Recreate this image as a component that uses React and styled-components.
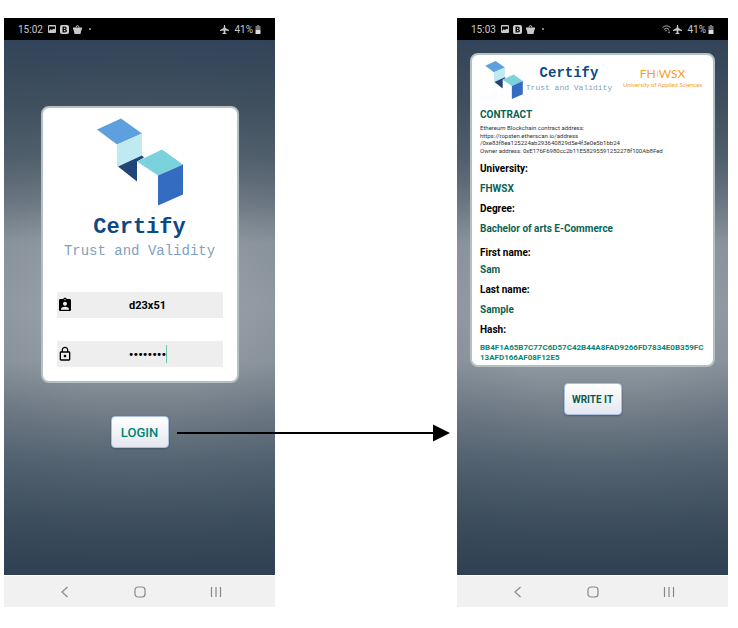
import React from "react";
import styled, { createGlobalStyle } from "styled-components";

const GlobalStyle = createGlobalStyle`
  * { box-sizing: border-box; }
  body { margin: 0; background: #fff; font-family: Roboto, "Liberation Sans", sans-serif; }
  h2, p, dl, dt, dd { margin: 0; }
`;

const Flow = styled.main`
  display: grid;
  grid-template-columns: 271fr 182fr 271fr;
  padding: 18px 10px 21px 4px;
`;

const Phone = styled.section`
  display: flex;
  flex-direction: column;
  min-width: 0;
`;

const StatusBar = styled.header`
  display: flex;
  align-items: center;
  justify-content: space-between;
  height: 22px;
  padding: 0 14px;
  background: #000;
  color: #c8c8c8;
  font-size: 10px;
`;

const StatusGroup = styled.div`
  display: flex;
  align-items: center;
  gap: ${(p) => p.$gap}px;
  svg { display: block; }
`;

const Screen = styled.div`
  display: flex;
  flex-direction: column;
  align-items: center;
  min-height: 535px;
  padding: ${(p) => p.$top}px 0 0;
  background:
    radial-gradient(ellipse 85% 75% at 50% 50%, rgba(44, 62, 84, 0) 30%, rgba(44, 62, 84, 0.22) 100%),
    linear-gradient(#33455a 0%, #43525f 12%, #55636f 22%, #707b85 30%, #929ba3 38%, #98a1a9 50%, #929ba3 60%, #77828c 68%, #566572 79%, #3f4f5d 90%, #2f4053 100%);
`;

const Card = styled.div`
  display: flex;
  flex-direction: column;
  border: 2px solid #b4c1c3;
  border-radius: 8px;
  background: #fff;
`;

const LoginCard = styled(Card)`
  align-items: center;
  width: 198px;
  min-height: 277px;
  padding: 10px 14px 14px;
`;

const ContractCard = styled(Card)`
  width: 245px;
  min-height: 314px;
  padding: 6px 8px 0;
`;

const Brand = styled.div`
  color: #0b4a84;
  font-family: "Liberation Mono", monospace;
  font-weight: 700;
  font-size: ${(p) => (p.$small ? 14 : 22)}px;
  line-height: ${(p) => (p.$small ? 18 : 28)}px;
  text-align: center;
`;

const Tagline = styled.div`
  color: #7f9fc0;
  font-family: "Liberation Mono", monospace;
  font-size: ${(p) => (p.$small ? 8 : 14)}px;
  line-height: ${(p) => (p.$small ? 10 : 18)}px;
  white-space: nowrap;
`;

const LoginBrand = styled.div`
  display: flex;
  flex-direction: column;
  align-items: center;
  margin-top: 8px;
`;

const LoginForm = styled.form`
  display: flex;
  flex-direction: column;
  gap: 23px;
  width: 100%;
  margin-top: 32px;
`;

const Field = styled.label`
  display: flex;
  align-items: center;
  position: relative;
  height: 26px;
  background: #eee;
  svg { position: absolute; left: 0; }
`;

const FieldInput = styled.input`
  width: 100%;
  height: 26px;
  padding: 0 0 0 16px;
  border: 0;
  background: transparent;
  color: #000;
  font: 700 ${(p) => (p.type === "password" ? 13 : 11)}px Roboto, sans-serif;
  text-align: center;
  outline: none;
`;

const Caret = styled.span`
  position: absolute;
  top: 4px;
  left: 109px;
  width: 1px;
  height: 18px;
  background: #6cc5b9;
`;

const ActionButton = styled.button`
  height: 32px;
  width: 58px;
  margin-top: ${(p) => p.$top}px;
  padding: 0;
  border: 1px solid #a9bfdd;
  border-radius: 4px;
  background: linear-gradient(#fff, #e4e7ef);
  box-shadow: 0 1px 2px rgba(30, 50, 80, 0.4);
  color: ${(p) => p.$color};
  font: ${(p) => p.$weight} ${(p) => p.$size}px Roboto, sans-serif;
  white-space: nowrap;
`;

const Letterhead = styled.div`
  display: grid;
  grid-template-columns: 39px 90px 1fr;
  height: 45px;
  padding-left: 5px;
`;

const BrandBlock = styled.div`
  display: flex;
  flex-direction: column;
  align-items: center;
  gap: 1px;
  padding-top: 3px;
`;

const School = styled.div`
  display: flex;
  flex-direction: column;
  align-items: center;
  padding: 6px 0 0 6px;
  color: #f7a01d;
  font-family: Lato, sans-serif;
  white-space: nowrap;
`;

const SchoolName = styled.div`
  display: flex;
  align-items: center;
  font-size: 12px;
  line-height: 14px;
`;

const SchoolDivider = styled.i`
  width: 1px;
  height: 6px;
  margin: 0 1px;
  background: #fbd08a;
`;

const SchoolCaption = styled.div`
  font-size: 6px;
  line-height: 8px;
`;

const Title = styled.h2`
  color: #0b6354;
  font-size: 10px;
  line-height: 14px;
  margin: 2px 0 1px;
`;

const Address = styled.p`
  color: #333;
  font-size: 6px;
  line-height: 7px;
  margin-top: 1px;
`;

const Details = styled.dl`
  display: flex;
  flex-direction: column;
  margin-top: 8px;
  font-weight: 700;
`;

const Term = styled.dt`
  color: #000;
  font-size: 10px;
  line-height: 14px;
`;

const Value = styled.dd`
  color: #0b6354;
  font-size: 10px;
  line-height: 14px;
  margin: ${(p) => (p.$tight ? 3 : 6)}px 0 6px;
  padding-bottom: ${(p) => (p.$last ? 4 : 0)}px;
`;

const Hash = styled.dd`
  color: #098673;
  font-size: 8px;
  line-height: 10px;
  margin-top: 6px;
  white-space: nowrap;
`;

const NavBar = styled.nav`
  display: flex;
  align-items: center;
  justify-content: space-around;
  height: 32px;
  padding: 0 21px 0 23px;
  border-top: 1px solid #fff;
  background: #f1f1f1;
`;

const NavButton = styled.button`
  display: flex;
  padding: 8px;
  border: 0;
  background: none;
`;

const Middle = styled.div`
  position: relative;
`;

const Arrow = styled.div`
  position: absolute;
  top: 406px;
  left: -98px;
  right: 7px;
  display: flex;
  align-items: center;
  &::before { content: ""; flex: 1; height: 2px; background: #000; }
`;

function Cubes({ width, height }) {
  return (
    <svg width={width} height={height} viewBox="0 0 86 87">
      <path d="M0 11 24 0 45 15 20 26Z" fill="#5da0dd" />
      <path d="M20 26 45 15V38L20 48Z" fill="#bfeaf2" />
      <path d="M21 48 45 37 47 39 40 43V63Z" fill="#204579" />
      <path d="M40 43 65 31 86 46 61 57Z" fill="#7ad3dc" />
      <path d="M61 57 86 46V76L61 87Z" fill="#346cc1" />
    </svg>
  );
}

function Plane() {
  return (
    <svg width="9" height="9" viewBox="0 0 9 9">
      <path d="M4 0h1l.4 3L9 5v1l-3.600-.6-.2 2L6.500 8.300V9h-4v-.7l1.300-.9-.2-2L0 6V5l3.600-2Z" fill="#c8c8c8" />
    </svg>
  );
}

function Status({ time, wifi }) {
  return (
    <StatusBar>
      <StatusGroup $gap={4}>
        <span>{time}</span>
        <svg width="9" height="8" viewBox="0 0 9 8">
          <path fillRule="evenodd" d="M2 0h6q1 0 1 1v6q0 1-1 1H2Q1 8 1 7V1Q1 0 2 0ZM2 1.500V6l1.800-2 1 1L7 3.500 8 4.500V1.500Z" fill="#c8c8c8" />
        </svg>
        <svg width="9" height="9" viewBox="0 0 9 9">
          <rect width="9" height="9" rx="2" fill="#d0d0d0" />
          <path fillRule="evenodd" d="M2.500 1.500H5Q6.700 1.500 6.700 3 6.700 4 6 4.400 7 4.800 7 5.800 7 7.500 5 7.500H2.500ZM4 2.700V4h.8Q5.400 4 5.400 3.300T4.800 2.700ZM4 5V6.300h.8Q5.600 6.300 5.600 5.600T4.800 5Z" fill="#111" />
        </svg>
        <svg width="9" height="9" viewBox="0 0 9 9">
          <path d="M3 2.500Q3 .7 4.500.7T6 2.500" fill="none" stroke="#c8c8c8" />
          <path d="M0 2.500h9v2H8.500L7.500 9h-6L.5 4.500H0Z" fill="#c8c8c8" />
        </svg>
        <svg width="9" height="2" viewBox="0 0 9 2">
          <circle cx="4" cy="1" r="1" fill="#aaa" />
        </svg>
      </StatusGroup>
      <StatusGroup $gap={5}>
        <StatusGroup $gap={2}>
          {wifi && (
            <svg width="9" height="8" viewBox="0 0 9 8">
              <path d="M.5 2.500Q4.500-.8 8.500 2.500M2 4.300Q4.500 2.300 7 4.300M3.300 6Q4.500 5 5 6" fill="none" stroke="#b0b0b0" />
              <path d="M7 5v3M6 7l1 1 1-1" fill="none" stroke="#999" strokeWidth=".7" />
            </svg>
          )}
          <Plane />
        </StatusGroup>
        <StatusGroup $gap={2}>
          <span>41%</span>
          <svg width="6" height="9" viewBox="0 0 6 9">
            <path d="M2 0h2v1h1.500v4h-5V1H2Z" fill="#777" />
            <path d="M.5 5h5v4h-5Z" fill="#ddd" />
          </svg>
        </StatusGroup>
      </StatusGroup>
    </StatusBar>
  );
}

function Navigation() {
  return (
    <NavBar>
      <NavButton aria-label="Back">
        <svg width="12" height="12" viewBox="0 0 12 12">
          <path d="M8.500 1 3 6l5.500 5" fill="none" stroke="#888" strokeWidth="1.200" />
        </svg>
      </NavButton>
      <NavButton aria-label="Home">
        <svg width="12" height="12" viewBox="0 0 12 12">
          <rect x="1" y="1" width="10" height="10" rx="3" fill="none" stroke="#888" strokeWidth="1.200" />
        </svg>
      </NavButton>
      <NavButton aria-label="Recent apps">
        <svg width="12" height="12" viewBox="0 0 12 12">
          <path d="M1.500 1v10M6 1v10M10.500 1v10" stroke="#888" strokeWidth="1.200" />
        </svg>
      </NavButton>
    </NavBar>
  );
}

export default function App() {
  return (
    <>
      <GlobalStyle />
      <Flow>
        <Phone>
          <Status time="15:02" />
          <Screen $top={66}>
            <LoginCard>
              <Cubes width={86} height={88} />
              <LoginBrand>
                <Brand>Certify</Brand>
                <Tagline>Trust and Validity</Tagline>
              </LoginBrand>
              <LoginForm id="login" onSubmit={(e) => e.preventDefault()}>
                <Field>
                  <svg width="16" height="16" viewBox="0 0 24 24">
                    <path d="M19 3h-4.180C14.400 1.840 13.300 1 12 1s-2.400.84-2.820 2H5c-1.100 0-2 .9-2 2v14c0 1.100.9 2 2 2h14c1.100 0 2-.9 2-2V5c0-1.100-.9-2-2-2zm-7 0c.55 0 1 .45 1 1s-.45 1-1 1-1-.45-1-1 .45-1 1-1zm0 4c1.660 0 3 1.340 3 3s-1.340 3-3 3-3-1.340-3-3 1.340-3 3-3zm6 12H6v-1.400c0-2 4-3.100 6-3.100s6 1.100 6 3.100V19z" />
                  </svg>
                  <FieldInput aria-label="User ID" defaultValue="d23x51" />
                </Field>
                <Field>
                  <svg width="16" height="16" viewBox="0 0 24 24">
                    <path d="M12 17c1.100 0 2-.9 2-2s-.9-2-2-2-2 .9-2 2 .9 2 2 2zm6-9h-1V6c0-2.760-2.240-5-5-5S7 3.240 7 6v2H6c-1.100 0-2 .9-2 2v10c0 1.100.9 2 2 2h12c1.100 0 2-.9 2-2V10c0-1.100-.9-2-2-2zM8.900 6c0-1.710 1.390-3.100 3.100-3.100s3.100 1.390 3.100 3.100v2H8.900V6zM18 20H6V10h12v10z" />
                  </svg>
                  <FieldInput aria-label="Password" type="password" defaultValue="password" />
                  <Caret />
                </Field>
              </LoginForm>
            </LoginCard>
            <ActionButton form="login" $top={33} $color="#008572" $weight={500} $size={13}>LOGIN</ActionButton>
          </Screen>
          <Navigation />
        </Phone>
        <Middle>
          <Arrow>
            <svg width="17" height="18" viewBox="0 0 17 18">
              <path d="M0 0.500 17 9 0 17.500Z" />
            </svg>
          </Arrow>
        </Middle>
        <Phone>
          <Status time="15:03" wifi />
          <Screen $top={13}>
            <ContractCard>
              <Letterhead>
                <Cubes width={38} height={38} />
                <BrandBlock>
                  <Brand $small>Certify</Brand>
                  <Tagline $small>Trust and Validity</Tagline>
                </BrandBlock>
                <School>
                  <SchoolName>FH<SchoolDivider />WSX</SchoolName>
                  <SchoolCaption>University of Applied Sciences</SchoolCaption>
                </School>
              </Letterhead>
              <Title>CONTRACT</Title>
              <Address>Ethereum Blockchain contract address:</Address>
              <Address>https://ropsten.etherscan.io/address<br />/0xe83f8ea125224ab293640829d5e4f3e0e5b1bb24</Address>
              <Address>Owner address: 0xE176F6980cc2b11E58295591252278f100Ab8Fed</Address>
              <Details>
                <Term>University:</Term>
                <Value>FHWSX</Value>
                <Term>Degree:</Term>
                <Value $last>Bachelor of arts E-Commerce</Value>
                <Term>First name:</Term>
                <Value $tight>Sam</Value>
                <Term>Last name:</Term>
                <Value>Sample</Value>
                <Term>Hash:</Term>
                <Hash>BB4F1A65B7C77C6D57C42B44A8FAD9266FD7834E0B359FC<br />13AFD166AF08F12E5</Hash>
              </Details>
            </ContractCard>
            <ActionButton $top={16} $color="#0b5a4d" $weight={700} $size={10}>WRITE IT</ActionButton>
          </Screen>
          <Navigation />
        </Phone>
      </Flow>
    </>
  );
}
